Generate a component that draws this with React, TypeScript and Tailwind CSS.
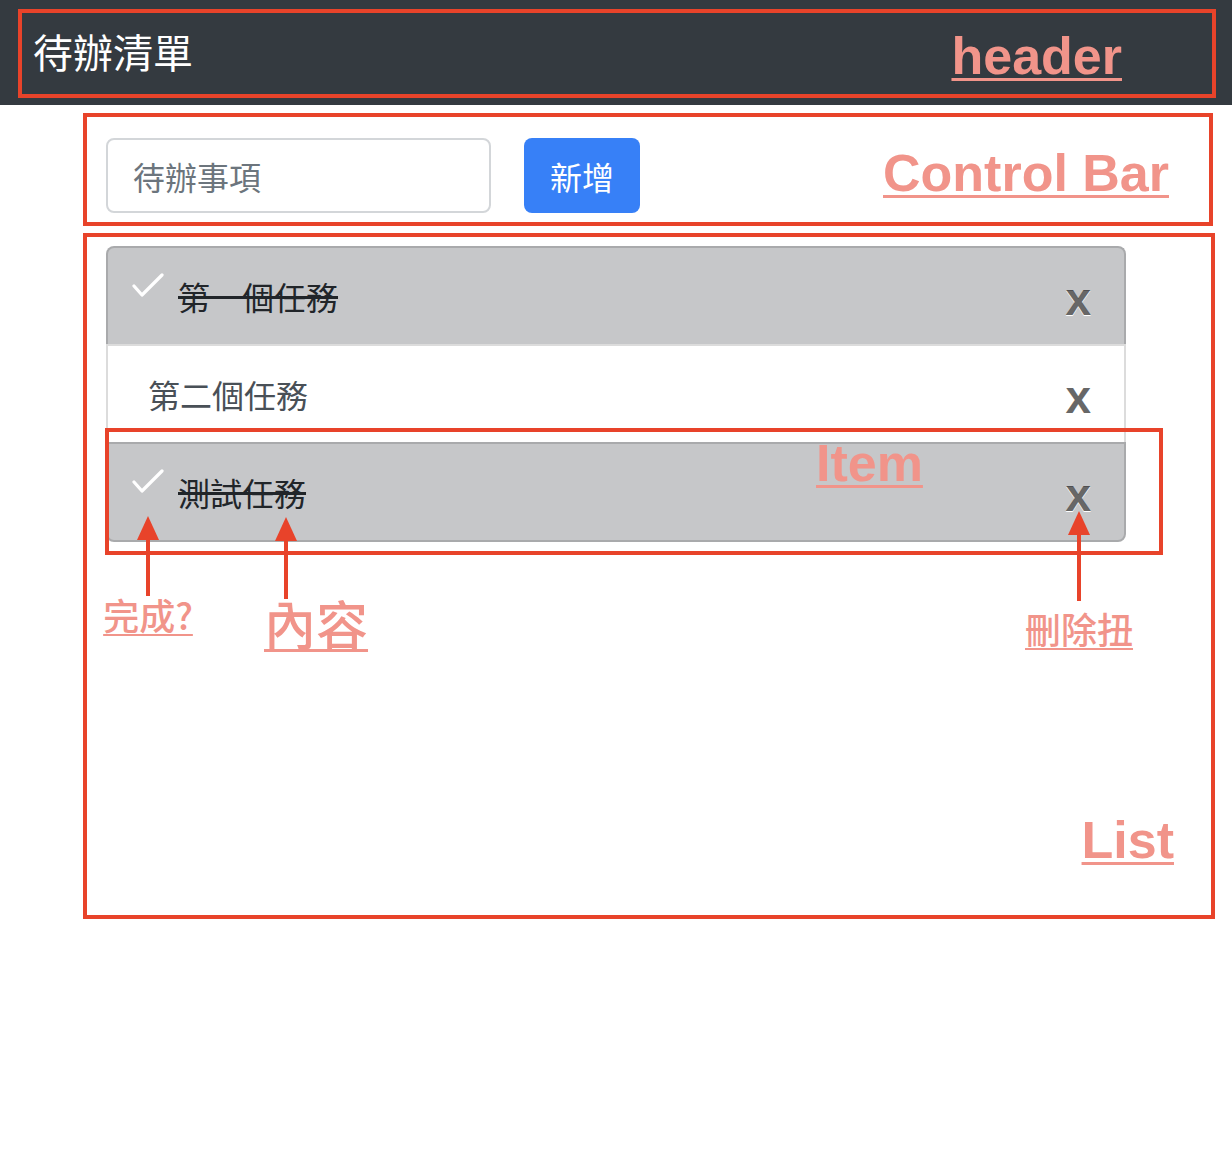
const CJK = "font-['Noto_Sans_CJK_TC','Noto_Sans_CJK_SC',sans-serif]"
const LATIN = "font-['Liberation_Sans',Arial,sans-serif]"
const NOTE = `${LATIN} font-bold text-[52px] leading-none text-[#f1948a] underline decoration-[3px] underline-offset-[4px] whitespace-nowrap`

const TODOS = [
  { text: '第一個任務', done: true },
  { text: '第二個任務', done: false },
  { text: '測試任務', done: true },
]

function Check() {
  return (
    <svg width="32" height="26" viewBox="0 0 32 26" className="shrink-0 -mt-[20px]" aria-hidden="true">
      <polyline points="2,13 10,22 30,2" fill="none" stroke="#ffffff" strokeWidth="3.2" strokeLinecap="round" strokeLinejoin="round" />
    </svg>
  )
}

function Arrow({ height, className = '' }: { height: number; className?: string }) {
  // annotation arrow pointing up
  return (
    <svg width="30" height={height} viewBox={`0 0 30 ${height}`} className={className} aria-hidden="true">
      <line x1="15" y1="18" x2="15" y2={height} stroke="#e8432a" strokeWidth="4" />
      <polygon points="15,0 26,24 4,24" fill="#e8432a" />
    </svg>
  )
}

export default function App() {
  return (
    <div className={`relative w-full min-h-[1164px] bg-white ${CJK}`}>
      {/* Header */}
      <header className="h-[105px] bg-[#343a40] pl-[18px] pr-[16px] pt-[9px] pb-[7px]">
        <div className="h-full border-4 border-[#e8432a] flex items-center justify-between pl-[11px] pr-[90px]">
          <h1 className="text-[40px] leading-none text-white -mt-[6px]">待辦清單</h1>
          <span className={`${NOTE} mt-[5px]`}>header</span>
        </div>
      </header>

      <main className="ml-[83px] w-[1132px]">
        {/* Control bar */}
        <section className="mt-[8px] w-[1130px] border-4 border-[#e8432a] pl-[19px] pr-[40px] pt-[21px] pb-[9px] flex items-center gap-[33px]">
          <input
            placeholder="待辦事項"
            className="w-[385px] h-[75px] rounded-[8px] border-2 border-[#d3d6d9] px-[25px] text-[32px] text-[#495057] placeholder:text-[#6c757d] outline-none"
          />
          <button className="w-[116px] h-[75px] rounded-[8px] bg-[#3780f7] text-white text-[32px]">新增</button>
          <span className={`${NOTE} ml-auto -mt-[5px]`}>Control Bar</span>
        </section>

        {/* List */}
        <section className="mt-[7px] h-[686px] border-4 border-[#e8432a] pl-[19px] pr-[37px] pt-[9px] pb-[49px] flex flex-col">
          <ul className="w-[1020px]">
            {TODOS.map((t, i) => (
              <li
                key={t.text}
                className={`h-[98px] flex items-center border-x-2 border-t-2 ${
                  t.done ? 'bg-[#c6c7c9] border-[#a9aaac] pl-[24px]' : 'bg-white border-[#dcdcdc] pl-[40px]'
                } ${i === 0 ? 'rounded-t-[8px]' : ''} ${i === TODOS.length - 1 ? 'border-b-2 h-[100px] rounded-b-[8px]' : ''} pr-[33px]`}
              >
                {t.done && <Check />}
                <span
                  className={`text-[32px] leading-none ${t.done ? 'ml-[14px] line-through text-[#212529]' : 'text-[#495057]'}`}
                >
                  {t.text}
                </span>
                <button
                  className={`ml-auto ${LATIN} font-bold text-[46px] leading-none text-black/60 [text-shadow:0_1px_0_#fff] mt-[6px]`}
                >
                  x
                </button>
              </li>
            ))}
          </ul>
          <span className={`${NOTE} mt-auto self-end`}>List</span>
        </section>
      </main>

      {/* Item annotation box, laid over the third row */}
      <div className="absolute left-[105px] top-[428px] w-[1058px] h-[127px] border-4 border-[#e8432a] pl-[707px] pt-[5px]">
        <span className={NOTE}>Item</span>
      </div>

      {/* Arrows with their captions */}
      <div className="absolute left-[101px] top-[516px] flex flex-col items-center w-[94px]">
        <Arrow height={80} />
        <span className="text-[36px] leading-none font-medium text-[#f1948a] underline decoration-[2px] underline-offset-[4px]">完成?</span>
      </div>
      <div className="absolute left-[264px] top-[517px] flex flex-col items-start w-[104px]">
        <Arrow height={82} className="ml-[7px]" />
        <span className="text-[52px] leading-none font-medium text-[#f1948a] underline decoration-[3px] underline-offset-[4px] -mt-[2px]">內容</span>
      </div>
      <div className="absolute left-[1025px] top-[511px] flex flex-col items-center w-[108px]">
        <Arrow height={90} />
        <span className="text-[36px] leading-none font-medium text-[#f1948a] underline decoration-[2px] underline-offset-[4px] mt-[9px]">刪除扭</span>
      </div>
    </div>
  )
}
